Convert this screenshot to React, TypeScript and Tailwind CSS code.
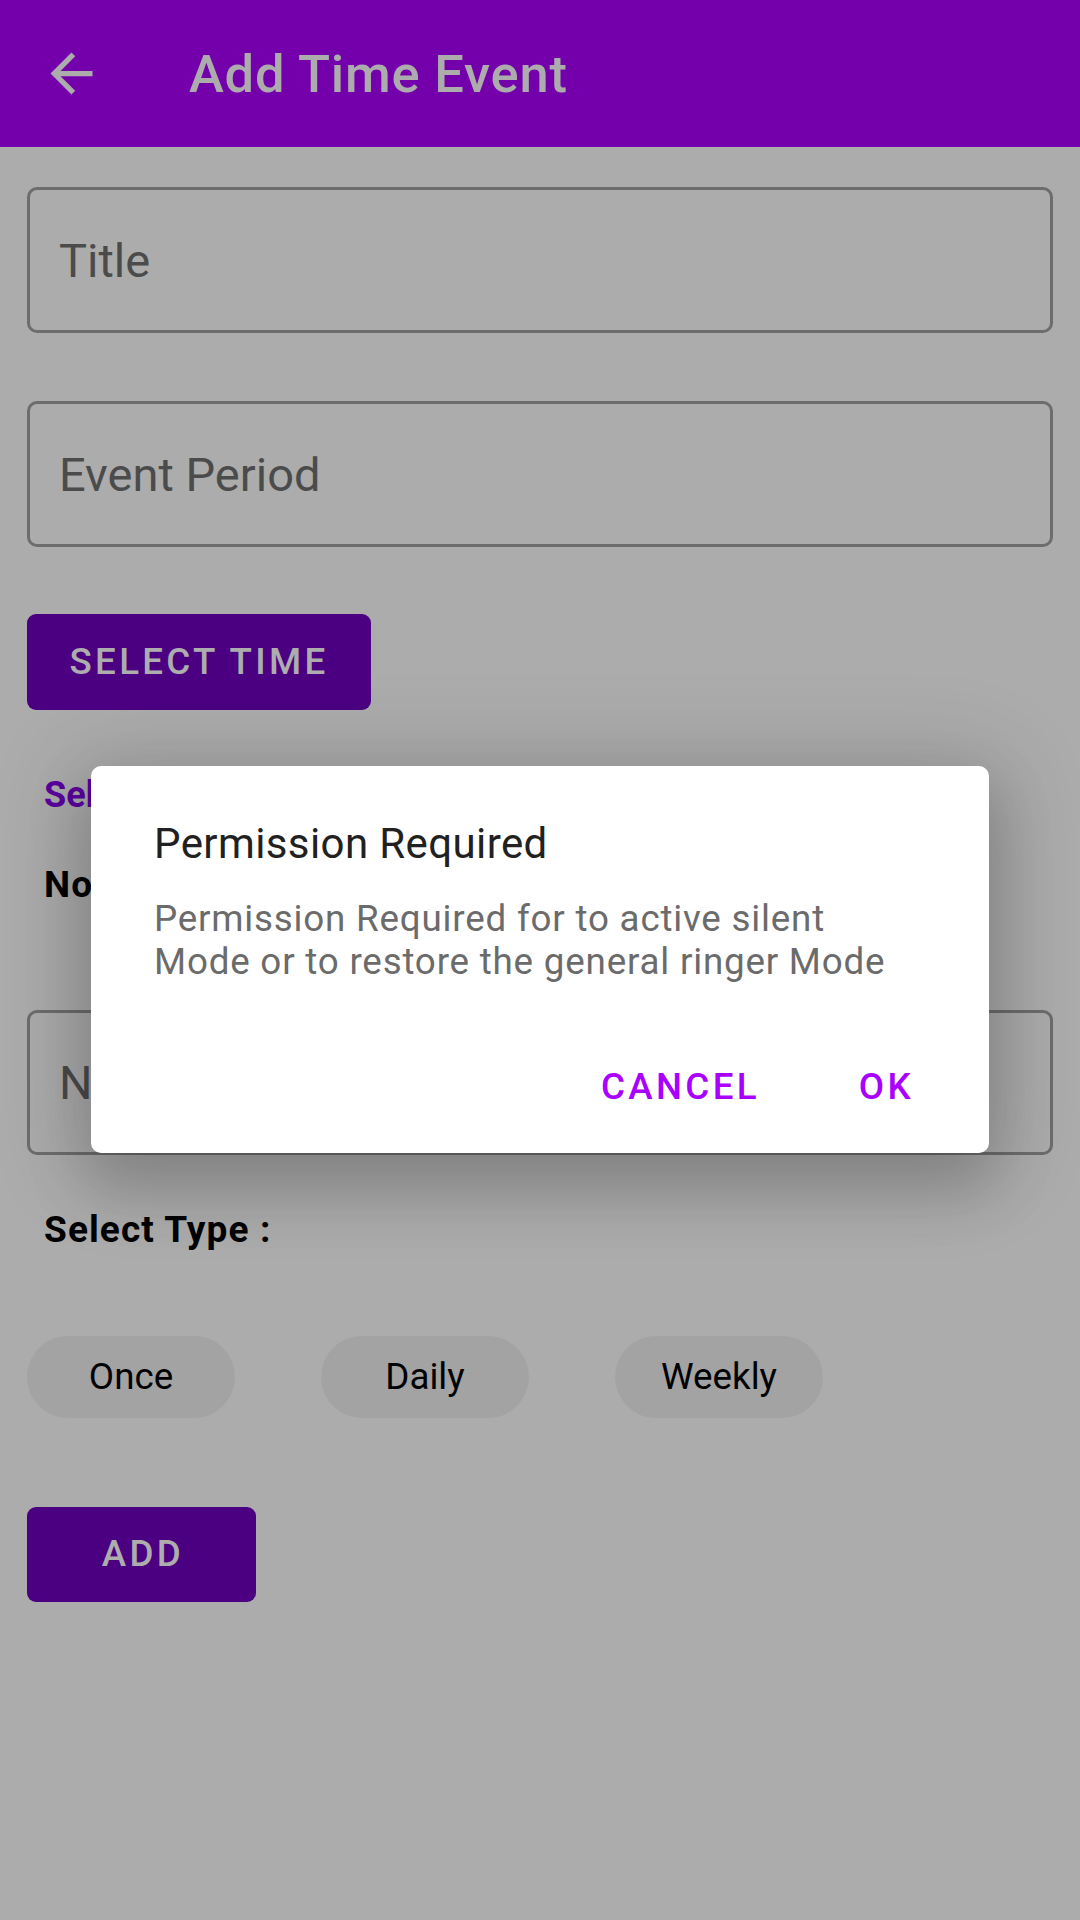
import React from "react";

export default function App() {
  return (
    <div className="relative w-[1080px] h-[1920px] overflow-hidden bg-[#acacac] font-['Roboto',sans-serif]">
      {/* Toolbar */}
      <div className="h-[147px] bg-[#7400ab] flex items-center">
        <div className="ml-[40px] w-[63px] h-[63px] flex items-center justify-center">
          <svg width="63" height="63" viewBox="0 0 24 24" fill="#acacac">
            <path d="M20 11H7.83l5.59-5.59L12 4l-8 8 8 8 1.41-1.41L7.83 13H20v-2z" />
          </svg>
        </div>
        <div className="ml-[86px] mt-[2px] text-[52.5px] font-medium tracking-[0.8px] text-[#acacac] leading-none">Add Time Event</div>
      </div>

      {/* Content */}
      <div className="px-[27px] flex flex-col">
        <div className="mt-[40px] h-[146px] border-[3px] border-[#6d6d6d] rounded-[10px] flex items-center pl-[29px]">
          <span className="text-[47px] text-[#4b4b4b] leading-none">Title</span>
        </div>
        <div className="mt-[68px] h-[146px] border-[3px] border-[#6d6d6d] rounded-[10px] flex items-center pl-[29px]">
          <span className="text-[47px] text-[#4b4b4b] leading-none">Event Period</span>
        </div>
        <div className="mt-[67px] w-[344px] h-[96px] bg-[#4b0082] rounded-[9px] flex items-center justify-center">
          <span className="text-[36.75px] font-medium tracking-[3.3px] text-[#adadad] leading-none">SELECT TIME</span>
        </div>
        <div className="mt-[64px] pl-[17px] text-[36px] font-bold text-[#5b00a0] leading-[43px]">Selected Time</div>
        <div className="mt-[46px] pl-[17px] text-[37px] font-bold tracking-[1.1px] text-black leading-[43px]">No Time Selected</div>
        <div className="mt-[104px] h-[145px] border-[3px] border-[#6d6d6d] rounded-[10px] flex items-center pl-[29px]">
          <span className="text-[47px] text-[#4b4b4b] leading-none">Note</span>
        </div>
        <div className="mt-[53px] pl-[17px] text-[37px] font-bold tracking-[1.1px] text-black leading-[43px]">Select Type :</div>
        <div className="mt-[85px] flex gap-[86px]">
          {["Once", "Daily", "Weekly"].map((t) => (
            <div key={t} className="w-[208px] h-[82px] rounded-full bg-[#a3a3a3] flex items-center justify-center">
              <span className="text-[36.75px] text-black leading-none">{t}</span>
            </div>
          ))}
        </div>
        <div className="mt-[89px] w-[229px] h-[95px] bg-[#4b0082] rounded-[9px] flex items-center justify-center">
          <span className="ml-[3px] text-[36.75px] font-medium tracking-[3.3px] text-[#adadad] leading-none">ADD</span>
        </div>
      </div>

      {/* Dialog */}
      <div className="absolute left-[91px] top-[766px] w-[898px] h-[387px] bg-white rounded-[10px] shadow-[0_30px_60px_8px_rgba(0,0,0,0.16),0_8px_90px_20px_rgba(0,0,0,0.12)] flex flex-col">
        <div className="mt-[53px] pl-[63px] text-[42px] tracking-[0.4px] text-[#212121] leading-[50px]">Permission Required</div>
        <div className="mt-[28px] pl-[63px] text-[36.75px] tracking-[0.8px] text-[#6b6b6b] leading-[43px]">
          Permission Required for to active silent
          <br />
          Mode or to restore the general ringer Mode
        </div>
        <div className="mt-[82px] flex justify-end gap-[99px] pr-[75px]">
          <span className="text-[36.75px] font-medium tracking-[3.3px] text-[#aa00ff] leading-[43px]">CANCEL</span>
          <span className="text-[36.75px] font-medium tracking-[3.3px] text-[#aa00ff] leading-[43px]">OK</span>
        </div>
      </div>
    </div>
  );
}
